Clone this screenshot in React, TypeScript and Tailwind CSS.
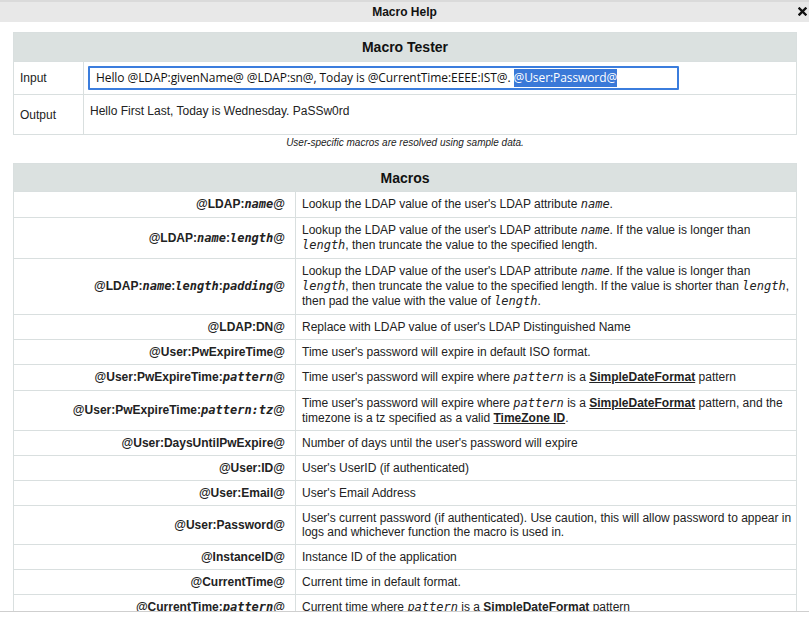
import React from "react";

const M = ({ children, b }: { children: React.ReactNode; b?: boolean }) => (
  <span
    className={`italic ${b ? "font-bold" : "font-normal"} font-['DejaVu_Sans_Mono',monospace] text-[12px] leading-[15px]`}
  >
    {children}
  </span>
);

const L = ({ children }: { children: React.ReactNode }) => (
  <span className="font-bold underline">{children}</span>
);

type Row = { k: React.ReactNode; d: React.ReactNode };

const rows: Row[] = [
  {
    k: (
      <>
        @LDAP:<M b>name</M>@
      </>
    ),
    d: (
      <>
        Lookup the LDAP value of the user's LDAP attribute <M>name</M>.
      </>
    ),
  },
  {
    k: (
      <>
        @LDAP:<M b>name</M>:<M b>length</M>@
      </>
    ),
    d: (
      <>
        Lookup the LDAP value of the user's LDAP attribute <M>name</M>. If the value is longer than{" "}
        <M>length</M>, then truncate the value to the specified length.
      </>
    ),
  },
  {
    k: (
      <>
        @LDAP:<M b>name</M>:<M b>length</M>:<M b>padding</M>@
      </>
    ),
    d: (
      <>
        Lookup the LDAP value of the user's LDAP attribute <M>name</M>. If the value is longer than{" "}
        <M>length</M>, then truncate the value to the specified length. If the value is shorter than{" "}
        <M>length</M>, then pad the value with the value of <M>length</M>.
      </>
    ),
  },
  { k: <>@LDAP:DN@</>, d: <>Replace with LDAP value of user's LDAP Distinguished Name</> },
  { k: <>@User:PwExpireTime@</>, d: <>Time user's password will expire in default ISO format.</> },
  {
    k: (
      <>
        @User:PwExpireTime:<M b>pattern</M>@
      </>
    ),
    d: (
      <>
        Time user's password will expire where <M>pattern</M> is a <L>SimpleDateFormat</L> pattern
      </>
    ),
  },
  {
    k: (
      <>
        @User:PwExpireTime:<M b>pattern:tz</M>@
      </>
    ),
    d: (
      <>
        Time user's password will expire where <M>pattern</M> is a <L>SimpleDateFormat</L> pattern, and the
        timezone is a tz specified as a valid <L>TimeZone ID</L>.
      </>
    ),
  },
  { k: <>@User:DaysUntilPwExpire@</>, d: <>Number of days until the user's password will expire</> },
  { k: <>@User:ID@</>, d: <>User's UserID (if authenticated)</> },
  { k: <>@User:Email@</>, d: <>User's Email Address</> },
  {
    k: <>@User:Password@</>,
    d: (
      <>
        User's current password (if authenticated). Use caution, this will allow password to appear in logs
        and whichever function the macro is used in.
      </>
    ),
  },
  { k: <>@InstanceID@</>, d: <>Instance ID of the application</> },
  { k: <>@CurrentTime@</>, d: <>Current time in default format.</> },
  {
    k: (
      <>
        @CurrentTime:<M b>pattern</M>@
      </>
    ),
    d: (
      <>
        Current time where <M>pattern</M> is a <span className="font-bold">SimpleDateFormat</span> pattern
      </>
    ),
  },
  {
    k: (
      <>
        @CurrentTime:<M b>pattern</M>:<M b>tz</M>@
      </>
    ),
    d: (
      <>
        Current time where <M>pattern</M> is a <span className="font-bold">SimpleDateFormat</span> pattern
      </>
    ),
  },
];

export default function App() {
  return (
    <div className="w-[809px] h-[618px] bg-white flex flex-col font-['Liberation_Sans',Arial,sans-serif] text-[12px] text-[#222] overflow-hidden">
      {/* Title bar */}
      <div className="h-[22px] shrink-0 bg-[#e8e8e8] border-t-2 border-[#dadada] flex items-center relative">
        <div className="flex-1 text-center font-bold text-[12px] text-[#111] leading-[20px]">Macro Help</div>
        <div className="absolute right-[2px] top-[5px]">
          <svg width="9" height="9" viewBox="0 0 9 9">
            <path d="M1.5 1.5 L7.5 7.5 M7.5 1.5 L1.5 7.5" stroke="#111" strokeWidth="2.4" strokeLinecap="square" />
          </svg>
        </div>
      </div>

      {/* Content */}
      <div className="h-[590px] shrink-0 overflow-hidden border-b border-[#cfcfcf] pl-[13px] pr-[12px] pt-[10px]">
        {/* Macro Tester */}
        <table className="w-full border-collapse table-fixed">
          <colgroup>
            <col className="w-[70px]" />
            <col />
          </colgroup>
          <thead>
            <tr>
              <th
                colSpan={2}
                className="bg-[#dbe1e0] border border-[#d9dfdf] text-[14px] font-bold text-[#111] h-[29px] leading-[16px] p-0"
              >
                Macro Tester
              </th>
            </tr>
          </thead>
          <tbody>
            <tr>
              <td className="border border-[#d9dfdf] px-[6px] h-[33px] align-middle">Input</td>
              <td className="border border-[#d9dfdf] px-[4px] py-0 align-middle">
                <div className="w-[591px] h-[24px] border-2 border-[#3b7ddd] rounded-[1px] flex items-center pl-[6px] font-['Open_Sans',sans-serif] text-[12px] tracking-[-0.085px] text-[#111] whitespace-nowrap overflow-hidden">
                  Hello @LDAP:givenName@ @LDAP:sn@, Today is @CurrentTime:EEEE:IST@.&nbsp;
                  <span className="bg-[#3a79d8] text-white">@User:Password@</span>
                </div>
              </td>
            </tr>
            <tr>
              <td className="border border-[#d9dfdf] px-[6px] h-[40px] align-middle">Output</td>
              <td className="border border-[#d9dfdf] px-[6px] align-top pt-[7px]">
                Hello First Last, Today is Wednesday. PaSSw0rd
              </td>
            </tr>
          </tbody>
        </table>
        <div className="text-center italic text-[10px] leading-[14px] text-[#222] mt-[1px]">
          User-specific macros are resolved using sample data.
        </div>

        {/* Macros */}
        <table className="w-full border-collapse table-fixed mt-[13px]">
          <colgroup>
            <col className="w-[282px]" />
            <col />
          </colgroup>
          <thead>
            <tr>
              <th
                colSpan={2}
                className="bg-[#dbe1e0] border border-[#d9dfdf] text-[14px] font-bold text-[#111] h-[28px] leading-[16px] p-0"
              >
                Macros
              </th>
            </tr>
          </thead>
          <tbody>
            {rows.map((r, i) => (
              <tr key={i}>
                <td className="border border-[#d9dfdf] text-right font-bold pr-[10px] pl-[6px] py-[5px] leading-[14px] align-middle whitespace-nowrap">
                  {r.k}
                </td>
                <td className="border border-[#d9dfdf] pl-[6px] pr-[4px] py-[5px] leading-[14px] align-middle">
                  {r.d}
                </td>
              </tr>
            ))}
          </tbody>
        </table>
      </div>
    </div>
  );
}
